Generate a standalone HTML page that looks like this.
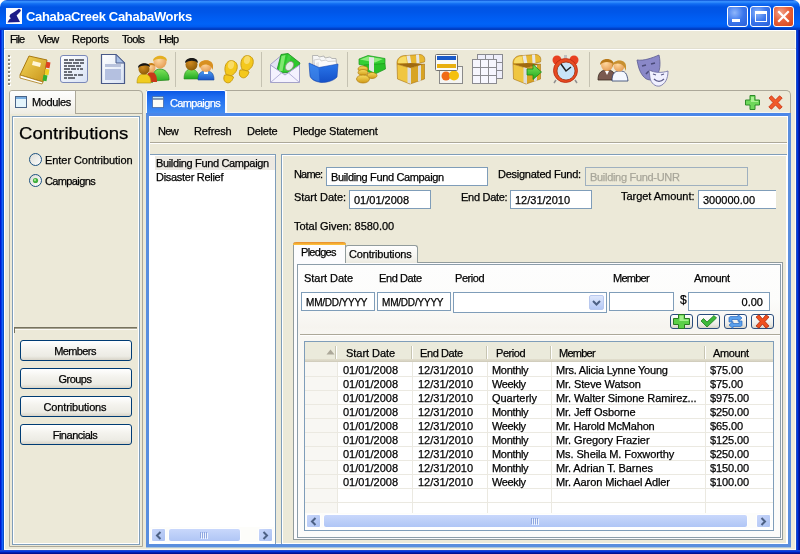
<!DOCTYPE html>
<html><head><meta charset="utf-8"><style>
*{box-sizing:border-box}
html,body{margin:0;padding:0}
body{width:800px;height:554px;overflow:hidden;position:relative;background:#ece9d8;font-family:"Liberation Sans",sans-serif;font-size:11px;color:#000}
.a{position:absolute}
.t{position:absolute;white-space:nowrap;line-height:13px;height:13px;will-change:transform;-webkit-text-stroke:0.25px currentColor}
svg{position:absolute;overflow:visible}
</style></head><body>
<div class="a" style="left:0;top:0;width:800px;height:30px;background:#fff"></div>
<div class="a" style="left:0px;top:0px;width:800px;height:30px;border-radius:7px 7px 0 0;background:linear-gradient(#0040c8 0px,#2f86fb 1px,#3a93ff 2px,#1a78f6 3px,#0a62ee 5px,#0055e5 7px,#0056e8 12px,#005df2 18px,#0063f8 24px,#005aee 27px,#0044d0 28px,#003ab8 30px)"></div>
<div class="a" style="left:0px;top:30px;width:4px;height:524px;background:linear-gradient(90deg,#0018d0 0,#0018d0 1px,#0440e6 1px,#0440e6 2px,#1a62fa 2px,#1a62fa 3px,#0a50c8 3px)"></div>
<div class="a" style="left:796px;top:30px;width:4px;height:524px;background:linear-gradient(90deg,#1848c8 0,#1848c8 1px,#0038e0 1px,#0038e0 2px,#0020b0 2px,#0020b0 3px,#001090 3px)"></div>
<div class="a" style="left:0px;top:550px;width:800px;height:4px;background:linear-gradient(#1a48d0 0,#1a48d0 1px,#0038e0 1px,#0038e0 2px,#0020b0 2px,#0020b0 3px,#001090 3px)"></div>
<svg style="left:6px;top:8px" width="16" height="16" viewBox="0 0 16 16">
<rect x="0" y="0" width="16" height="16" fill="#fbfbff"/>
<path d="M13 0.8 L15 2 L14.2 3.8 L10.6 7.4 L12.2 10.5 L14 14 L1.5 14.5 L3.2 11.5 L4.8 10.2 L3.4 8.6 L4.4 6.2 L9 3.5 Z" fill="#1c1a88"/>
</svg>
<div class="t" style="left:26px;top:9px;letter-spacing:-0.32px;color:#fff;font-weight:bold;font-size:13px;line-height:16px;height:16px;-webkit-text-stroke:0">CahabaCreek CahabaWorks</div>
<div class="a" style="left:727px;top:6px;width:21px;height:21px;border:1px solid #fff;border-radius:3px;background:radial-gradient(circle at 35% 30%,#8fb6fb 0,#3a76ec 50%,#2a5fd8 100%)"></div>
<div class="a" style="left:750px;top:6px;width:21px;height:21px;border:1px solid #fff;border-radius:3px;background:radial-gradient(circle at 35% 30%,#8fb6fb 0,#3a76ec 50%,#2a5fd8 100%)"></div>
<div class="a" style="left:773px;top:6px;width:21px;height:21px;border:1px solid #fff;border-radius:3px;background:radial-gradient(circle at 35% 30%,#f2a58c 0,#e8623c 45%,#d54316 100%)"></div>
<div class="a" style="left:732px;top:19px;width:8px;height:3px;background:#fff"></div>
<div class="a" style="left:755px;top:11px;width:12px;height:11px;border:1px solid #fff;border-top-width:3px"></div>
<svg style="left:776px;top:9px" width="15" height="15" viewBox="0 0 15 15">
<path d="M3 3 L12 12 M12 3 L3 12" stroke="#fff" stroke-width="2.2" stroke-linecap="square"/></svg>
<div class="a" style="left:4px;top:30px;width:792px;height:1px;background:#fff"></div>
<div class="a" style="left:4px;top:30px;width:1px;height:520px;background:#fff"></div>
<div class="a" style="left:795px;top:30px;width:1px;height:520px;background:#fbfaf6"></div>
<div class="a" style="left:4px;top:549px;width:792px;height:1px;background:#fbfaf6"></div>
<div class="t" style="left:10px;top:33px;letter-spacing:-0.85px;">File</div>
<div class="t" style="left:38px;top:33px;letter-spacing:-0.85px;">View</div>
<div class="t" style="left:72px;top:33px;letter-spacing:-0.27px;">Reports</div>
<div class="t" style="left:122px;top:33px;letter-spacing:-0.68px;">Tools</div>
<div class="t" style="left:159px;top:33px;letter-spacing:-0.85px;">Help</div>
<div class="a" style="left:4px;top:48px;width:792px;height:1px;background:#e2dfd0"></div>
<div class="a" style="left:4px;top:49px;width:792px;height:1px;background:#fff"></div>
<div class="a" style="left:8px;top:55px;width:2px;height:2px;background:#8a867a"></div>
<div class="a" style="left:10px;top:56px;width:1px;height:2px;background:#fff"></div>
<div class="a" style="left:8px;top:57px;width:2px;height:1px;background:#fff"></div>
<div class="a" style="left:8px;top:59px;width:2px;height:2px;background:#8a867a"></div>
<div class="a" style="left:10px;top:60px;width:1px;height:2px;background:#fff"></div>
<div class="a" style="left:8px;top:61px;width:2px;height:1px;background:#fff"></div>
<div class="a" style="left:8px;top:63px;width:2px;height:2px;background:#8a867a"></div>
<div class="a" style="left:10px;top:64px;width:1px;height:2px;background:#fff"></div>
<div class="a" style="left:8px;top:65px;width:2px;height:1px;background:#fff"></div>
<div class="a" style="left:8px;top:67px;width:2px;height:2px;background:#8a867a"></div>
<div class="a" style="left:10px;top:68px;width:1px;height:2px;background:#fff"></div>
<div class="a" style="left:8px;top:69px;width:2px;height:1px;background:#fff"></div>
<div class="a" style="left:8px;top:71px;width:2px;height:2px;background:#8a867a"></div>
<div class="a" style="left:10px;top:72px;width:1px;height:2px;background:#fff"></div>
<div class="a" style="left:8px;top:73px;width:2px;height:1px;background:#fff"></div>
<div class="a" style="left:8px;top:75px;width:2px;height:2px;background:#8a867a"></div>
<div class="a" style="left:10px;top:76px;width:1px;height:2px;background:#fff"></div>
<div class="a" style="left:8px;top:77px;width:2px;height:1px;background:#fff"></div>
<div class="a" style="left:8px;top:79px;width:2px;height:2px;background:#8a867a"></div>
<div class="a" style="left:10px;top:80px;width:1px;height:2px;background:#fff"></div>
<div class="a" style="left:8px;top:81px;width:2px;height:1px;background:#fff"></div>
<div class="a" style="left:8px;top:83px;width:2px;height:2px;background:#8a867a"></div>
<div class="a" style="left:10px;top:84px;width:1px;height:2px;background:#fff"></div>
<div class="a" style="left:8px;top:85px;width:2px;height:1px;background:#fff"></div>
<div class="a" style="left:175px;top:52px;width:1px;height:35px;background:#c5c2b2"></div>
<div class="a" style="left:261px;top:52px;width:1px;height:35px;background:#c5c2b2"></div>
<div class="a" style="left:347px;top:52px;width:1px;height:35px;background:#c5c2b2"></div>
<div class="a" style="left:589px;top:52px;width:1px;height:35px;background:#c5c2b2"></div>
<svg style="left:0px;top:0px" width="1" height="1" viewBox="0 0 1 1"><defs>
<linearGradient id="gold" x1="0" y1="0" x2="1" y2="1"><stop offset="0" stop-color="#f4d65a"/><stop offset="1" stop-color="#c8941a"/></linearGradient>
<linearGradient id="gold2" x1="0" y1="0" x2="0" y2="1"><stop offset="0" stop-color="#f8dc60"/><stop offset="1" stop-color="#d09a18"/></linearGradient>
<linearGradient id="green" x1="0" y1="0" x2="0" y2="1"><stop offset="0" stop-color="#7ee35a"/><stop offset="1" stop-color="#1ea81e"/></linearGradient>
<linearGradient id="blue" x1="0" y1="0" x2="0" y2="1"><stop offset="0" stop-color="#4d9cf0"/><stop offset="1" stop-color="#1a55c8"/></linearGradient>
<linearGradient id="bluebox" x1="0" y1="0" x2="0" y2="1"><stop offset="0" stop-color="#2a78ec"/><stop offset="1" stop-color="#1450c8"/></linearGradient>
<linearGradient id="doc" x1="0" y1="0" x2="1" y2="1"><stop offset="0" stop-color="#ffffff"/><stop offset="1" stop-color="#d8e2f4"/></linearGradient>
<radialGradient id="face" cx="0.4" cy="0.35" r="0.7"><stop offset="0" stop-color="#ffd8a0"/><stop offset="1" stop-color="#e49a50"/></radialGradient>
<radialGradient id="dface" cx="0.4" cy="0.35" r="0.7"><stop offset="0" stop-color="#d08a20"/><stop offset="1" stop-color="#8a5a08"/></radialGradient>
</defs></svg>
<svg style="left:18px;top:54px" width="34" height="32" viewBox="0 0 34 32">
<path d="M11 2 L29 6 L25 28 L2 21 Z" fill="url(#gold)" stroke="#a87810" stroke-width="1"/>
<path d="M2 21 L25 28 L24 30 L2 24 Z" fill="#fff" stroke="#a87810" stroke-width="0.8"/>
<path d="M15 7 L23 9 L22 13 L14 11 Z" fill="#fff6d8"/>
<rect x="28" y="8" width="4" height="6" fill="#e04020" transform="rotate(10 30 11)"/>
<rect x="27" y="15" width="4" height="6" fill="#f0d020" transform="rotate(10 29 18)"/>
<rect x="25" y="21" width="4" height="6" fill="#30b030" transform="rotate(10 27 24)"/>
</svg>
<svg style="left:60px;top:55px" width="29" height="28" viewBox="0 0 29 28">
<rect x="0.5" y="0.5" width="27" height="27" rx="2.5" fill="url(#doc)" stroke="#7a88b8"/>
<g fill="#6a6e78">
<rect x="4" y="4" width="4" height="2"/><rect x="9" y="4" width="5" height="2"/><rect x="15" y="4" width="9" height="2"/>
<rect x="4" y="7" width="8" height="2"/><rect x="13" y="7" width="6" height="2"/><rect x="20" y="7" width="4" height="2"/>
<rect x="4" y="10" width="3" height="2"/><rect x="8" y="10" width="7" height="2"/><rect x="16" y="10" width="5" height="2"/>
<rect x="4" y="13" width="6" height="2"/><rect x="11" y="13" width="5" height="2"/><rect x="17" y="13" width="2" height="2"/><rect x="20" y="13" width="3" height="2"/>
<rect x="4" y="16" width="3" height="2"/><rect x="8" y="16" width="4" height="2"/>
<rect x="4" y="19" width="9" height="2"/><rect x="14" y="19" width="3" height="2"/><rect x="18" y="19" width="5" height="2"/>
<rect x="4" y="22" width="3" height="2"/><rect x="8" y="22" width="7" height="2"/>
</g></svg>
<svg style="left:100px;top:53px" width="27" height="32" viewBox="0 0 27 32">
<path d="M1.5 1.5 L16 1.5 L24.5 10 L24.5 30.5 L1.5 30.5 Z" fill="url(#doc)" stroke="#4a5a88" stroke-width="1.2"/>
<path d="M16 1.5 L16 10 L24.5 10 Z" fill="#a8c0e8" stroke="#4a5a88" stroke-width="1"/>
<rect x="5" y="11" width="16" height="3" fill="#b8c2dc"/>
<rect x="5" y="16" width="16" height="11" fill="#b4c0e0"/>
</svg>
<svg style="left:136px;top:53px" width="34" height="32" viewBox="0 0 34 32">
<path d="M16 30 C16 20 19 16 24 16 C29 16 33 20 33 26 L33 27 L16 28 Z" fill="url(#green)" stroke="#2a8a20" stroke-width="0.8"/>
<circle cx="24" cy="9" r="6.5" fill="url(#face)"/>
<path d="M17 8 C17 2 31 1 31 8 C28 5 21 5 17 8 Z" fill="#e4b020"/>
<path d="M10 29 C10 22 12 19 15 19 C19 19 21 22 21 29 Z" fill="#c83818"/>
<circle cx="15" cy="15" r="4.5" fill="url(#face)"/>
<path d="M11 14 C11 9 19 9 19 13 C16 11 13 12 11 14 Z" fill="#c88018"/>
<path d="M1 30 C1 23 4 21 8 21 C12 21 15 23 15 30 Z" fill="#f0cc20" stroke="#b09010" stroke-width="0.6"/>
<circle cx="8" cy="16" r="5.5" fill="url(#dface)"/>
<path d="M2 15 C2 9 14 9 14 14 C11 12 5 12 2 15 Z" fill="#141414"/>
</svg>
<svg style="left:183px;top:56px" width="33" height="26" viewBox="0 0 33 26">
<path d="M1 23 C1 16 4 13 8 13 C12 13 16 16 16 23 Z" fill="url(#green)" stroke="#2a8a20" stroke-width="0.6"/>
<circle cx="8.5" cy="8.5" r="6" fill="url(#dface)"/>
<path d="M2 7 C2 1 15 0 15 7 C12 4 6 4 2 7 Z" fill="#181818"/>
<path d="M15 24 C15 17 18 15 23 15 C28 15 31 17 31 24 Z" fill="url(#blue)" stroke="#184a9a" stroke-width="0.6"/>
<rect x="21" y="14" width="4" height="4" fill="#fff"/>
<circle cx="23" cy="10" r="6" fill="url(#face)"/>
<path d="M16 10 C15 3 29 2 30 9 L30 14 C28 8 20 6 17 12 Z" fill="#d89020"/>
</svg>
<svg style="left:222px;top:54px" width="33" height="30" viewBox="0 0 33 30">
<g fill="#f4c81c" stroke="#c89a10" stroke-width="0.9">
<g transform="translate(2.5 6) rotate(14 6 8)"><path d="M6.5 0.5 C10.5 0.5 12.5 3.5 12.5 7.5 C12.5 11 10.5 13.5 8.5 15.5 L3.5 15.5 C1.5 13 0.5 10.5 0.5 7.5 C0.5 3.5 2.5 0.5 6.5 0.5 Z"/></g>
<g transform="translate(1 20.5) rotate(14 5 4)"><path d="M0.8 1.5 C3 0.3 8 0.3 10 1.2 C10 5 8 8.3 5.2 8.3 C2.2 8.3 0.3 6 0.8 1.5 Z"/></g>
<g transform="translate(18.5 1) rotate(14 6 8)"><path d="M6.5 0.5 C10.5 0.5 12.5 3.5 12.5 7.5 C12.5 11 10.5 13.5 8.5 15.5 L3.5 15.5 C1.5 13 0.5 10.5 0.5 7.5 C0.5 3.5 2.5 0.5 6.5 0.5 Z"/></g>
<g transform="translate(16.5 15.5) rotate(14 5 4)"><path d="M0.8 1.5 C3 0.3 8 0.3 10 1.2 C10 5 8 8.3 5.2 8.3 C2.2 8.3 0.3 6 0.8 1.5 Z"/></g>
</g>
<g fill="#fbe27a" opacity="0.8"><ellipse cx="9" cy="11" rx="3" ry="4" transform="rotate(14 9 11)"/><ellipse cx="25" cy="6" rx="3" ry="4" transform="rotate(14 25 6)"/></g>
</svg>
<svg style="left:268px;top:52px" width="34" height="33" viewBox="0 0 34 33">
<path d="M2.5 12.5 L12 4.5 L31.5 11.5 L31.5 30.5 L2.5 30.5 Z" fill="#e4e2f4" stroke="#a4a2c8" stroke-width="1"/>
<path d="M9 18 L13 2.5 L20 1.5 L32 11 L28 20 L12 21 Z" fill="#2cc82c" stroke="#188a18" stroke-width="0.8"/>
<path d="M13.5 4 L17.5 3 L14.5 19 L11 19 Z" fill="#80e870"/>
<path d="M20 3 L23 4 L19 19 L16 19 Z" fill="#40d040"/>
<ellipse cx="21.5" cy="14" rx="3.5" ry="5" fill="#e4f0e4" stroke="#9a8a8a" stroke-width="0.7" transform="rotate(35 21.5 14)"/>
<path d="M2.5 13 L17 23 L31.5 13 L31.5 30.5 L2.5 30.5 Z" fill="#f4f2fe" stroke="#a4a2c8" stroke-width="1"/>
<path d="M2.5 30.5 L14 20.5 M31.5 30.5 L20 20.5" stroke="#b4b2da" stroke-width="1"/>
</svg>
<svg style="left:306px;top:52px" width="34" height="33" viewBox="0 0 34 33">
<path d="M6.5 3.5 L12 3.5 L13 5 L18 4 L19 6 L24 5 L26 6.5 L30 6.5 L31 14 L7 14 Z" fill="#f6f6f6" stroke="#a8a8a8" stroke-width="0.8"/>
<path d="M8 8 L14 7 L15 9 L20 8 L22 9.5 L30 9 L31 15 L9 16 Z" fill="#fbfbfb" stroke="#b8b8b8" stroke-width="0.6"/>
<path d="M10 11 L13 10 L13 16 L10 16 Z" fill="#e8e8e8"/>
<path d="M3 11 L13 15.5 L32 12 L31 25 C28 28.5 22 30.5 15 30.5 C9 29.5 5 27.5 4 24 Z" fill="url(#bluebox)" stroke="#1a48b0" stroke-width="0.6"/>
<path d="M3.5 12 L12.5 16 L13.5 29.5 C9 28.5 5.5 27 4.5 24 Z" fill="#4a94f0" opacity="0.55"/>
</svg>
<svg style="left:355px;top:54px" width="33" height="30" viewBox="0 0 33 30">
<path d="M4 5 L13 1.5 L30 4.5 L30 9.5 L21 13.5 L4 10.5 Z" fill="#34d034" stroke="#1c961c" stroke-width="0.7"/>
<path d="M5 5.5 L13 2.5 L28 5 L20 8.5 Z" fill="#8cec7c"/>
<path d="M9 11 L30 9.5 L30.5 15 L20 20 L9 16.5 Z" fill="#28c028" stroke="#1c961c" stroke-width="0.7"/>
<path d="M14 3 L19 3.5 L19 18.5 L14 16 Z" fill="#e4e4e4"/>
<g fill="url(#gold2)" stroke="#b07a08" stroke-width="0.7">
<ellipse cx="17" cy="21.5" rx="5" ry="3"/>
<ellipse cx="8" cy="15" rx="5" ry="3"/>
<ellipse cx="8" cy="18.5" rx="5" ry="3"/>
<ellipse cx="8" cy="25" rx="6.5" ry="4"/>
</g></svg>
<svg style="left:395px;top:54px" width="32" height="32" viewBox="0 0 32 32">
<path d="M2 10 C1.5 4 6 1 12 1.5 L25 0.5 C29 1 30.5 4 29.5 8 L16 10.5 Z" fill="#e8b830" stroke="#a87010" stroke-width="0.6"/>
<path d="M3 9 C3 4 7 2 11 2.5 L12 9.5 Z" fill="#f8dc68"/>
<path d="M11.5 1.8 L15 1.5 L16.5 10 L13 10 Z M21 0.8 L24 0.6 L24.5 9 L21.5 9.5 Z" fill="#e6e6e6"/>
<path d="M2 10 L16 9 L29.5 10 L15 14 Z" fill="#a06a10"/>
<path d="M2 10 L15 14 L15 30 L2.5 25 Z" fill="#f0c640" stroke="#a87010" stroke-width="0.6"/>
<path d="M15 14 L29.5 10 L29.5 25 L15 30 Z" fill="#d8a424" stroke="#a87010" stroke-width="0.6"/>
<path d="M12.5 13.3 L16 14.3 L16 30 L12.5 28.8 Z M23 12 L26 11 L26 26.5 L23 27.5 Z" fill="#dcdcdc"/>
</svg>
<svg style="left:434px;top:53px" width="30" height="32" viewBox="0 0 30 32">
<rect x="5.5" y="13.5" width="23" height="17" fill="#f4f4f2" stroke="#8a8a8a"/>
<circle cx="12" cy="23" r="4.5" fill="#f06a18"/>
<circle cx="20" cy="22.5" r="5" fill="#f4c010"/>
<rect x="1.5" y="1.5" width="22" height="16" rx="1" fill="#fbfbf8" stroke="#707070"/>
<rect x="3" y="3" width="19" height="4" fill="#1a5ac8"/>
<rect x="3" y="11" width="19" height="4" fill="#e8b010"/>
</svg>
<svg style="left:471px;top:53px" width="34" height="32" viewBox="0 0 34 32">
<rect x="6.5" y="1.5" width="25" height="24" fill="#eeeefa" stroke="#8a8a90"/>
<path d="M14.5 1.5 V25.5 M22.5 1.5 V25.5 M6.5 9.5 H31.5 M6.5 17.5 H31.5" stroke="#8a8a90"/>
<rect x="1.5" y="6.5" width="24" height="24" fill="#f6f6fe" stroke="#8a8a90"/>
<path d="M9.5 6.5 V30.5 M17.5 6.5 V30.5 M1.5 14.5 H25.5 M1.5 22.5 H25.5" stroke="#8a8a90"/>
</svg>
<svg style="left:511px;top:54px" width="32" height="32" viewBox="0 0 32 32">
<path d="M2 10 C1.5 4 6 1 12 1.5 L25 0.5 C29 1 30.5 4 29.5 8 L16 10.5 Z" fill="#e8b830" stroke="#a87010" stroke-width="0.6"/>
<path d="M3 9 C3 4 7 2 11 2.5 L12 9.5 Z" fill="#f8dc68"/>
<path d="M11.5 1.8 L15 1.5 L16.5 10 L13 10 Z M21 0.8 L24 0.6 L24.5 9 L21.5 9.5 Z" fill="#e6e6e6"/>
<path d="M2 10 L16 9 L29.5 10 L15 14 Z" fill="#a06a10"/>
<path d="M2 10 L15 14 L15 30 L2.5 25 Z" fill="#f0c640" stroke="#a87010" stroke-width="0.6"/>
<path d="M15 14 L29.5 10 L29.5 25 L15 30 Z" fill="#d8a424" stroke="#a87010" stroke-width="0.6"/>
<path d="M12.5 13.3 L16 14.3 L16 30 L12.5 28.8 Z M23 12 L26 11 L26 26.5 L23 27.5 Z" fill="#dcdcdc"/>
<path d="M16 15 L22 15 L22 10.5 L30.5 18 L22 25.5 L22 21 L16 21 Z" fill="url(#green)" stroke="#1a8a1a" stroke-width="0.8"/></svg>
<svg style="left:552px;top:54px" width="28" height="30" viewBox="0 0 28 30">
<circle cx="5" cy="6" r="4.5" fill="#e84020"/>
<circle cx="22" cy="6" r="4.5" fill="#e84020"/>
<rect x="12" y="1" width="3" height="3" fill="#c0c0c0"/>
<path d="M4 26 L2 29 M23 26 L25 29" stroke="#909090" stroke-width="1.5"/>
<circle cx="13.5" cy="16.5" r="12" fill="#e84a20" stroke="#b82810" stroke-width="0.8"/>
<circle cx="14" cy="17" r="9" fill="#c8e4f8" stroke="#9a3010" stroke-width="0.8"/>
<path d="M9 10 L14 17 L19 13" fill="none" stroke="#202020" stroke-width="1.5"/>
</svg>
<svg style="left:597px;top:56px" width="32" height="26" viewBox="0 0 32 26">
<path d="M1 24 C1 16 5 14 10 14 C15 14 18 16 19 24 Z" fill="#7a5a50" stroke="#3a2a20" stroke-width="0.8"/>
<path d="M8 15 L10 19 L12 15 Z" fill="#fff"/>
<circle cx="10" cy="9" r="6" fill="url(#face)"/>
<path d="M3 9 C3 1 17 1 17 9 C14 5 6 5 3 9 Z" fill="#b87818"/>
<path d="M15 25 C15 17 18 15 23 15 C28 15 30 17 31 25 Z" fill="#f4f8ff" stroke="#2a3a6a" stroke-width="0.8"/>
<circle cx="22" cy="10" r="5.5" fill="url(#face)"/>
<path d="M15 11 C14 3 29 2 29 10 L29 15 C27 9 24 6 17 8 Z" fill="#c89030"/>
</svg>
<svg style="left:636px;top:54px" width="33" height="32" viewBox="0 0 33 32">
<path d="M1 6 C8 7 16 4 23 1 C25 10 24 18 20 23 C16 27 11 27 7 22 C3 17 2 11 1 6 Z" fill="#8a88c8" stroke="#5a5a90" stroke-width="0.8"/>
<path d="M6 12 L10 11 M15 10 L19 9 M10 20 C12 17 15 17 17 18" stroke="#4a4a78" stroke-width="1.5" fill="none"/>
<path d="M13 16 C19 19 26 19 32 17 C32 25 29 30 24 32 C19 33 15 29 14 24 Z" fill="#f0f0ff" stroke="#6a6aa0" stroke-width="0.8"/>
<path d="M17 20 L20 21 M25 21 L28 20 M18 25 C21 28 25 28 28 25" stroke="#5a5a88" stroke-width="1.3" fill="none"/>
</svg>
<div class="a" style="left:9px;top:90px;width:134px;height:457px;border:1px solid #aca899;border-radius:3px 4px 0 0;background:#ece9d8"></div>
<div class="a" style="left:10px;top:91px;width:65px;height:23px;background:linear-gradient(#fdfdfd,#f6f5f0 60%,#eeece2);border-radius:2px 0 0 0"></div>
<div class="a" style="left:75px;top:90px;width:1px;height:24px;background:#aca899"></div>
<div class="a" style="left:76px;top:113px;width:66px;height:1px;background:#aca899"></div>
<svg style="left:15px;top:96px" width="12" height="12" viewBox="0 0 12 12">
<rect x="0.5" y="0.5" width="11" height="11" fill="#e4f4fc" stroke="#4a6488"/>
<rect x="1" y="1" width="10" height="2" fill="#7aaee0"/>
</svg>
<div class="t" style="left:32px;top:96px;letter-spacing:-0.4px;">Modules</div>
<div class="a" style="left:12px;top:116px;width:128px;height:429px;border:1px solid #7f9db9;background:#ece9d8"></div>
<div class="a" style="left:13px;top:117px;width:126px;height:427px;border:1px solid #fff"></div>
<div class="t" style="left:19px;top:125px;font-size:16px;line-height:18px;height:18px;transform:scaleX(1.16);transform-origin:0 0;-webkit-text-stroke:0.25px #000">Contributions</div>
<svg style="left:29px;top:153px" width="13" height="13" viewBox="0 0 13 13">
<defs><linearGradient id="rg153" x1="0" y1="0" x2="1" y2="1"><stop offset="0" stop-color="#dcdbd4"/><stop offset="1" stop-color="#fff"/></linearGradient></defs>
<circle cx="6.5" cy="6.5" r="6" fill="url(#rg153)" stroke="#1c5180" stroke-width="1"/>

</svg>
<svg style="left:29px;top:174px" width="13" height="13" viewBox="0 0 13 13">
<defs><linearGradient id="rg174" x1="0" y1="0" x2="1" y2="1"><stop offset="0" stop-color="#dcdbd4"/><stop offset="1" stop-color="#fff"/></linearGradient></defs>
<circle cx="6.5" cy="6.5" r="6" fill="url(#rg174)" stroke="#1c5180" stroke-width="1"/>
<circle cx="6.5" cy="6.5" r="2.6" fill="#3fae3c"/><circle cx="6" cy="6" r="1.2" fill="#9ee28e"/>
</svg>
<div class="t" style="left:45px;top:154px;letter-spacing:-0.06px;">Enter Contribution</div>
<div class="t" style="left:45px;top:175px;letter-spacing:-0.62px;">Campaigns</div>
<div class="a" style="left:14px;top:327px;width:123px;height:1px;background:#76725f"></div>
<div class="a" style="left:14px;top:328px;width:123px;height:1px;background:#a8a491"></div>
<div class="a" style="left:14px;top:327px;width:1px;height:6px;background:#76725f"></div>
<div class="a" style="left:15px;top:329px;width:122px;height:1px;background:#fbfaf6"></div>
<div class="a" style="left:20px;top:340px;width:112px;height:21px;border:1px solid #003c74;border-radius:3px;background:linear-gradient(#ffffff,#f4f3ee 40%,#ecebe4 80%,#d8d4c8)"></div>
<div class="t" style="left:19px;top:345px;width:112px;text-align:center;letter-spacing:-0.59px">Members</div>
<div class="a" style="left:20px;top:368px;width:112px;height:21px;border:1px solid #003c74;border-radius:3px;background:linear-gradient(#ffffff,#f4f3ee 40%,#ecebe4 80%,#d8d4c8)"></div>
<div class="t" style="left:19px;top:373px;width:112px;text-align:center;letter-spacing:-0.55px">Groups</div>
<div class="a" style="left:20px;top:396px;width:112px;height:21px;border:1px solid #003c74;border-radius:3px;background:linear-gradient(#ffffff,#f4f3ee 40%,#ecebe4 80%,#d8d4c8)"></div>
<div class="t" style="left:19px;top:401px;width:112px;text-align:center;letter-spacing:-0.15px">Contributions</div>
<div class="a" style="left:20px;top:424px;width:112px;height:21px;border:1px solid #003c74;border-radius:3px;background:linear-gradient(#ffffff,#f4f3ee 40%,#ecebe4 80%,#d8d4c8)"></div>
<div class="t" style="left:19px;top:429px;width:112px;text-align:center;letter-spacing:-0.49px">Financials</div>
<div class="a" style="left:146px;top:90px;width:645px;height:24px;border:1px solid #aca899;border-bottom:0;border-radius:0 5px 0 0;background:#ece9d8"></div>
<div class="a" style="left:226px;top:91px;width:563px;height:22px;border-left:1px solid #fff;border-bottom:1px solid #f6f5ef"></div>
<div class="a" style="left:146px;top:90px;width:80px;height:26px;background:#fbfcff;border-radius:2px 2px 0 0"></div>
<div class="a" style="left:147px;top:91px;width:78px;height:25px;background:linear-gradient(#0a57e4 0,#1f6cf0 6px,#2f7df2 14px,#4a92f2 25px);border-radius:1px 1px 0 0"></div>
<svg style="left:152px;top:96px" width="12" height="12" viewBox="0 0 12 12">
<rect x="0.5" y="0.5" width="11" height="11" fill="#fdfdf6" stroke="#2a5090" stroke-width="1" stroke-opacity="0.6"/>
<rect x="1" y="1" width="10" height="1.5" fill="#c8ecfa"/>
<rect x="1" y="2.5" width="10" height="1" fill="#1e3c70"/>
</svg>
<div class="t" style="left:170px;top:97px;letter-spacing:-0.62px;color:#fff">Campaigns</div>
<div class="a" style="left:146px;top:113px;width:645px;height:434px;border:3px solid #5a8ede;border-top-color:#4a86e8;background:#ece9d8"></div>
<div class="a" style="left:149px;top:116px;width:639px;height:428px;border:1px solid #fff"></div>
<div class="a" style="left:146px;top:547px;width:645px;height:1px;background:#a8c4dc"></div>
<svg style="left:745px;top:95px" width="15" height="15" viewBox="0 0 15 15">
<path d="M5 0.5 H10 V5 H14.5 V10 H10 V14.5 H5 V10 H0.5 V5 H5 Z" fill="#6ed85a" stroke="#2e8a28" stroke-width="1"/>
<path d="M6 2 H9 V6 H13 V7 H6 Z" fill="#a8f090"/>
</svg>
<svg style="left:768px;top:95px" width="15" height="15" viewBox="0 0 15 15">
<path d="M1 3 L3.5 0.8 L7.5 5 L11.5 0.8 L14.2 3 L10 7.5 L14.2 12 L11.5 14.2 L7.5 10 L3.5 14.2 L0.8 12 L5 7.5 Z" fill="#f05a2a" stroke="#c83010" stroke-width="0.8"/>
</svg>
<div class="t" style="left:158px;top:125px;letter-spacing:-0.7px;">New</div>
<div class="t" style="left:194px;top:125px;letter-spacing:-0.15px;">Refresh</div>
<div class="t" style="left:247px;top:125px;letter-spacing:-0.24px;">Delete</div>
<div class="t" style="left:293px;top:125px;letter-spacing:-0.18px;">Pledge Statement</div>
<div class="a" style="left:150px;top:142px;width:637px;height:1px;background:#aca899"></div>
<div class="a" style="left:150px;top:143px;width:637px;height:1px;background:#fff"></div>
<div class="a" style="left:150px;top:154px;width:126px;height:390px;border-top:1px solid #7f9db9;border-right:1px solid #7f9db9;background:#fff"></div>
<div class="a" style="left:155px;top:156px;width:120px;height:14px;background:#ece9e2"></div>
<div class="t" style="left:156px;top:157px;letter-spacing:-0.35px;">Building Fund Campaign</div>
<div class="t" style="left:156px;top:171px;letter-spacing:-0.29px;">Disaster Relief</div>
<div class="a" style="left:281px;top:154px;width:506px;height:390px;border-top:1px solid #7f9db9;border-left:1px solid #7f9db9;background:#ece9d8"></div>
<div class="a" style="left:282px;top:155px;width:505px;height:389px;border-top:1px solid #fff;border-left:1px solid #fff;border-right:1px solid #fff;border-bottom:1px solid #fff"></div>
<div class="t" style="left:294px;top:168px;letter-spacing:-0.84px;">Name:</div>
<div class="a" style="left:326px;top:167px;width:162px;height:19px;border:1px solid #7f9db9;background:#fff;"></div>
<div class="t" style="left:331px;top:171px;letter-spacing:-0.35px;">Building Fund Campaign</div>
<div class="t" style="left:498px;top:168px;letter-spacing:-0.25px;">Designated Fund:</div>
<div class="a" style="left:585px;top:167px;width:163px;height:19px;border:1px solid #7f9db9;background:#fff;background:#ece9d8;border-color:#9fb0bf"></div>
<div class="t" style="left:590px;top:171px;letter-spacing:-0.3px;color:#a8a69a">Building Fund-UNR</div>
<div class="t" style="left:294px;top:191px;letter-spacing:-0.05px;">Start Date:</div>
<div class="a" style="left:349px;top:190px;width:82px;height:19px;border:1px solid #7f9db9;background:#fff;"></div>
<div class="t" style="left:354px;top:194px;">01/01/2008</div>
<div class="t" style="left:461px;top:191px;letter-spacing:-0.28px;">End Date:</div>
<div class="a" style="left:510px;top:190px;width:82px;height:19px;border:1px solid #7f9db9;background:#fff;"></div>
<div class="t" style="left:515px;top:194px;">12/31/2010</div>
<div class="t" style="left:621px;top:190px;letter-spacing:-0.04px;">Target Amount:</div>
<div class="a" style="left:698px;top:190px;width:78px;height:19px;border:1px solid #7f9db9;border-right:0;background:#fff"></div>
<div class="t" style="left:703px;top:194px;">300000.00</div>
<div class="t" style="left:294px;top:220px;letter-spacing:-0.04px;">Total Given: 8580.00</div>
<div class="a" style="left:293px;top:262px;width:490px;height:278px;border:1px solid #919b9c;background:#fcfcfe"></div>
<div class="a" style="left:345px;top:245px;width:73px;height:18px;border:1px solid #919b9c;border-bottom:0;border-radius:3px 3px 0 0;background:linear-gradient(#fefefe,#f4f3ee 70%,#eceae0)"></div>
<div class="t" style="left:349px;top:248px;letter-spacing:-0.17px;">Contributions</div>
<div class="a" style="left:293px;top:242px;width:53px;height:21px;border-left:1px solid #919b9c;border-right:1px solid #919b9c;background:#fcfcfe;border-radius:3px 3px 0 0"></div>
<div class="a" style="left:293px;top:242px;width:53px;height:3px;background:linear-gradient(#e68b2c,#ffc73c);border-radius:3px 3px 0 0"></div>
<div class="t" style="left:301px;top:246px;letter-spacing:-0.71px;">Pledges</div>
<div class="a" style="left:297px;top:264px;width:484px;height:274px;border:1px solid #8c9daa;background:linear-gradient(#fdfdfd 0,#fcfcfb 35px,#f6f4ef 62px,#f8f7f3 72px,#fcfcfb 277px)"></div>
<div class="t" style="left:304px;top:272px;letter-spacing:-0.04px;">Start Date</div>
<div class="t" style="left:379px;top:272px;letter-spacing:-0.39px;">End Date</div>
<div class="t" style="left:455px;top:272px;letter-spacing:-0.44px;">Period</div>
<div class="t" style="left:613px;top:272px;letter-spacing:-0.74px;">Member</div>
<div class="t" style="left:694px;top:272px;letter-spacing:-0.37px;">Amount</div>
<div class="a" style="left:301px;top:292px;width:74px;height:19px;border:1px solid #7f9db9;background:#fff;"></div>
<div class="t" style="left:306px;top:296px;letter-spacing:-0.93px;font-size:10px;letter-spacing:-0.2px">MM/DD/YYYY</div>
<div class="a" style="left:377px;top:292px;width:74px;height:19px;border:1px solid #7f9db9;background:#fff;"></div>
<div class="t" style="left:382px;top:296px;letter-spacing:-0.93px;font-size:10px;letter-spacing:-0.2px">MM/DD/YYYY</div>
<div class="a" style="left:453px;top:292px;width:154px;height:21px;border:1px solid #7f9db9;background:#fff"></div>
<div class="a" style="left:589px;top:295px;width:15px;height:15px;border:1px solid #b9c9ef;border-radius:2px;background:linear-gradient(#dfe8fc,#b4c8f6)"></div>
<svg style="left:592px;top:298px" width="9" height="9" viewBox="0 0 9 9"><path d="M1 3 L4.5 6.5 L8 3" fill="none" stroke="#4d6185" stroke-width="2"/></svg>
<div class="a" style="left:609px;top:292px;width:65px;height:19px;border:1px solid #7f9db9;background:#fff;"></div>
<div class="t" style="left:680px;top:294px;letter-spacing:-0.1px;font-size:12px">$</div>
<div class="a" style="left:688px;top:292px;width:82px;height:19px;border:1px solid #7f9db9;background:#fff;"></div>
<div class="t" style="left:688px;top:296px;width:75px;text-align:right;">0.00</div>
<div class="a" style="left:670px;top:314px;width:23px;height:15px;border:1px solid #2a4c7c;border-radius:3px;background:linear-gradient(#fff,#ecebe6 70%,#d8d4c8)"></div>
<svg style="left:670px;top:314px" width="23" height="15" viewBox="0 0 23 15"><path d="M8.5 0.5 H14.5 V4.5 H19.5 V10.5 H14.5 V14.5 H8.5 V10.5 H3.5 V4.5 H8.5 Z" fill="#5cd048" stroke="#2a7a22" stroke-width="1"/><path d="M9.5 1.5 H13.5 V5.5 H18.5 V7 H9.5 Z" fill="#a4f08c"/></svg>
<div class="a" style="left:697px;top:314px;width:23px;height:15px;border:1px solid #2a4c7c;border-radius:3px;background:linear-gradient(#fff,#ecebe6 70%,#d8d4c8)"></div>
<svg style="left:697px;top:314px" width="23" height="15" viewBox="0 0 23 15"><path d="M4 7 L6.5 4.5 L10 8 L17 1.5 L19.5 4 L10 13 Z" fill="#3cb83a" stroke="#1e7a1e" stroke-width="0.8"/></svg>
<div class="a" style="left:724px;top:314px;width:23px;height:15px;border:1px solid #2a4c7c;border-radius:3px;background:linear-gradient(#fff,#ecebe6 70%,#d8d4c8)"></div>
<svg style="left:724px;top:314px" width="23" height="15" viewBox="0 0 23 15"><path d="M5 8 L5 4 C5 3 6 2.5 7 2.5 L14 2.5 L14 0.5 L18 4 L14 7.5 L14 5.5 L8 5.5 L8 8 Z" fill="#5aa0ec" stroke="#2a6ac0" stroke-width="0.7"/><path d="M18 7 L18 11 C18 12 17 12.5 16 12.5 L9 12.5 L9 14.5 L5 11 L9 7.5 L9 9.5 L15 9.5 L15 7 Z" fill="#5aa0ec" stroke="#2a6ac0" stroke-width="0.7"/></svg>
<div class="a" style="left:751px;top:314px;width:23px;height:15px;border:1px solid #2a4c7c;border-radius:3px;background:linear-gradient(#fff,#ecebe6 70%,#d8d4c8)"></div>
<svg style="left:751px;top:314px" width="23" height="15" viewBox="0 0 23 15"><path d="M5 3 L8 0.8 L11.5 5 L15 0.8 L18 3 L14 7.5 L18 12 L15 14.2 L11.5 10 L8 14.2 L5 12 L9 7.5 Z" fill="#f0501e" stroke="#a82a10" stroke-width="0.8"/></svg>
<div class="a" style="left:300px;top:334px;width:480px;height:1px;background:#aca899"></div>
<div class="a" style="left:300px;top:335px;width:480px;height:1px;background:#fff"></div>
<div class="a" style="left:304px;top:341px;width:470px;height:190px;border:1px solid #7f9db9;background:#fff"></div>
<div class="a" style="left:305px;top:342px;width:468px;height:20px;background:linear-gradient(#ebeadb 0,#ebeadb 17px,#e2decd 17px,#d8d4c3 19px,#cbc7b8 20px)"></div>
<div class="a" style="left:335px;top:346px;width:1px;height:13px;background:#c7c5b2"></div>
<div class="a" style="left:336px;top:346px;width:1px;height:13px;background:#fff"></div>
<div class="a" style="left:411px;top:346px;width:1px;height:13px;background:#c7c5b2"></div>
<div class="a" style="left:412px;top:346px;width:1px;height:13px;background:#fff"></div>
<div class="a" style="left:486px;top:346px;width:1px;height:13px;background:#c7c5b2"></div>
<div class="a" style="left:487px;top:346px;width:1px;height:13px;background:#fff"></div>
<div class="a" style="left:550px;top:346px;width:1px;height:13px;background:#c7c5b2"></div>
<div class="a" style="left:551px;top:346px;width:1px;height:13px;background:#fff"></div>
<div class="a" style="left:704px;top:346px;width:1px;height:13px;background:#c7c5b2"></div>
<div class="a" style="left:705px;top:346px;width:1px;height:13px;background:#fff"></div>
<svg style="left:326px;top:349px" width="10" height="6" viewBox="0 0 10 6"><path d="M0.5 5.5 L4.5 0.5 L8.5 5.5 Z" fill="#aca899"/></svg>
<div class="t" style="left:346px;top:347px;letter-spacing:-0.04px;">Start Date</div>
<div class="t" style="left:420px;top:347px;letter-spacing:-0.39px;">End Date</div>
<div class="t" style="left:496px;top:347px;letter-spacing:-0.44px;">Period</div>
<div class="t" style="left:559px;top:347px;letter-spacing:-0.74px;">Member</div>
<div class="t" style="left:713px;top:347px;letter-spacing:-0.37px;">Amount</div>
<div class="a" style="left:305px;top:362px;width:32px;height:151px;background:#f8f7f3"></div>
<div class="a" style="left:337px;top:362px;width:1px;height:151px;background:#ebe9e1"></div>
<div class="a" style="left:412px;top:362px;width:1px;height:151px;background:#ebe9e1"></div>
<div class="a" style="left:487px;top:362px;width:1px;height:151px;background:#ebe9e1"></div>
<div class="a" style="left:551px;top:362px;width:1px;height:151px;background:#ebe9e1"></div>
<div class="a" style="left:705px;top:362px;width:1px;height:151px;background:#ebe9e1"></div>
<div class="a" style="left:305px;top:376px;width:468px;height:1px;background:#ebe9e1"></div>
<div class="a" style="left:305px;top:390px;width:468px;height:1px;background:#ebe9e1"></div>
<div class="a" style="left:305px;top:404px;width:468px;height:1px;background:#ebe9e1"></div>
<div class="a" style="left:305px;top:418px;width:468px;height:1px;background:#ebe9e1"></div>
<div class="a" style="left:305px;top:432px;width:468px;height:1px;background:#ebe9e1"></div>
<div class="a" style="left:305px;top:446px;width:468px;height:1px;background:#ebe9e1"></div>
<div class="a" style="left:305px;top:460px;width:468px;height:1px;background:#ebe9e1"></div>
<div class="a" style="left:305px;top:474px;width:468px;height:1px;background:#ebe9e1"></div>
<div class="a" style="left:305px;top:488px;width:468px;height:1px;background:#ebe9e1"></div>
<div class="a" style="left:305px;top:502px;width:468px;height:1px;background:#ebe9e1"></div>
<div class="t" style="left:343px;top:364px;">01/01/2008</div>
<div class="t" style="left:418px;top:364px;">12/31/2010</div>
<div class="t" style="left:492px;top:364px;letter-spacing:-0.32px;">Monthly</div>
<div class="t" style="left:556px;top:364px;letter-spacing:-0.2px;">Mrs. Alicia Lynne Young</div>
<div class="t" style="left:710px;top:364px;letter-spacing:-0.1px;">$75.00</div>
<div class="t" style="left:343px;top:378px;">01/01/2008</div>
<div class="t" style="left:418px;top:378px;">12/31/2010</div>
<div class="t" style="left:492px;top:378px;letter-spacing:-0.37px;">Weekly</div>
<div class="t" style="left:556px;top:378px;letter-spacing:-0.1px;">Mr. Steve Watson</div>
<div class="t" style="left:710px;top:378px;letter-spacing:-0.1px;">$75.00</div>
<div class="t" style="left:343px;top:392px;">01/01/2008</div>
<div class="t" style="left:418px;top:392px;">12/31/2010</div>
<div class="t" style="left:492px;top:392px;letter-spacing:-0.03px;">Quarterly</div>
<div class="t" style="left:556px;top:392px;letter-spacing:-0.1px;">Mr. Walter Simone Ramirez...</div>
<div class="t" style="left:710px;top:392px;letter-spacing:-0.1px;">$975.00</div>
<div class="t" style="left:343px;top:406px;">01/01/2008</div>
<div class="t" style="left:418px;top:406px;">12/31/2010</div>
<div class="t" style="left:492px;top:406px;letter-spacing:-0.32px;">Monthly</div>
<div class="t" style="left:556px;top:406px;letter-spacing:-0.1px;">Mr. Jeff Osborne</div>
<div class="t" style="left:710px;top:406px;letter-spacing:-0.1px;">$250.00</div>
<div class="t" style="left:343px;top:420px;">01/01/2008</div>
<div class="t" style="left:418px;top:420px;">12/31/2010</div>
<div class="t" style="left:492px;top:420px;letter-spacing:-0.37px;">Weekly</div>
<div class="t" style="left:556px;top:420px;letter-spacing:-0.2px;">Mr. Harold McMahon</div>
<div class="t" style="left:710px;top:420px;letter-spacing:-0.1px;">$65.00</div>
<div class="t" style="left:343px;top:434px;">01/01/2008</div>
<div class="t" style="left:418px;top:434px;">12/31/2010</div>
<div class="t" style="left:492px;top:434px;letter-spacing:-0.32px;">Monthly</div>
<div class="t" style="left:556px;top:434px;letter-spacing:-0.1px;">Mr. Gregory Frazier</div>
<div class="t" style="left:710px;top:434px;letter-spacing:-0.1px;">$125.00</div>
<div class="t" style="left:343px;top:448px;">01/01/2008</div>
<div class="t" style="left:418px;top:448px;">12/31/2010</div>
<div class="t" style="left:492px;top:448px;letter-spacing:-0.32px;">Monthly</div>
<div class="t" style="left:556px;top:448px;letter-spacing:-0.1px;">Ms. Sheila M. Foxworthy</div>
<div class="t" style="left:710px;top:448px;letter-spacing:-0.1px;">$250.00</div>
<div class="t" style="left:343px;top:462px;">01/01/2008</div>
<div class="t" style="left:418px;top:462px;">12/31/2010</div>
<div class="t" style="left:492px;top:462px;letter-spacing:-0.32px;">Monthly</div>
<div class="t" style="left:556px;top:462px;letter-spacing:-0.1px;">Mr. Adrian T. Barnes</div>
<div class="t" style="left:710px;top:462px;letter-spacing:-0.1px;">$150.00</div>
<div class="t" style="left:343px;top:476px;">01/01/2008</div>
<div class="t" style="left:418px;top:476px;">12/31/2010</div>
<div class="t" style="left:492px;top:476px;letter-spacing:-0.37px;">Weekly</div>
<div class="t" style="left:556px;top:476px;letter-spacing:-0.1px;">Mr. Aaron Michael Adler</div>
<div class="t" style="left:710px;top:476px;letter-spacing:-0.1px;">$100.00</div>
<div class="a" style="left:305px;top:513px;width:467px;height:15px;background:#fdfdfa"></div>
<div class="a" style="left:306px;top:514px;width:15px;height:14px;border:1px solid #fff;border-radius:2px;background:linear-gradient(135deg,#c8d6fb,#b7caf5 60%,#aac0f2)"></div>
<svg style="left:310px;top:517px" width="7" height="9" viewBox="0 0 7 9"><path d="M5.5 1 L2 4.5 L5.5 8" fill="none" stroke="#4d6185" stroke-width="2"/></svg>
<div class="a" style="left:756px;top:514px;width:15px;height:14px;border:1px solid #fff;border-radius:2px;background:linear-gradient(135deg,#c8d6fb,#b7caf5 60%,#aac0f2)"></div>
<svg style="left:760px;top:517px" width="7" height="9" viewBox="0 0 7 9"><path d="M1.5 1 L5 4.5 L1.5 8" fill="none" stroke="#4d6185" stroke-width="2"/></svg>
<div class="a" style="left:323px;top:514px;width:425px;height:14px;border:1px solid #fff;border-radius:3px;background:linear-gradient(#c9d8fc,#bccff8 50%,#b0c6f6)"></div>
<div class="a" style="left:531px;top:518px;width:1px;height:6px;background:#8ea6e0"></div>
<div class="a" style="left:532px;top:519px;width:1px;height:6px;background:#eef4fe"></div>
<div class="a" style="left:533px;top:518px;width:1px;height:6px;background:#8ea6e0"></div>
<div class="a" style="left:534px;top:519px;width:1px;height:6px;background:#eef4fe"></div>
<div class="a" style="left:535px;top:518px;width:1px;height:6px;background:#8ea6e0"></div>
<div class="a" style="left:536px;top:519px;width:1px;height:6px;background:#eef4fe"></div>
<div class="a" style="left:537px;top:518px;width:1px;height:6px;background:#8ea6e0"></div>
<div class="a" style="left:538px;top:519px;width:1px;height:6px;background:#eef4fe"></div>
<div class="a" style="left:150px;top:527px;width:124px;height:15px;background:#fdfdfa"></div>
<div class="a" style="left:151px;top:528px;width:15px;height:14px;border:1px solid #fff;border-radius:2px;background:linear-gradient(135deg,#c8d6fb,#b7caf5 60%,#aac0f2)"></div>
<svg style="left:155px;top:531px" width="7" height="9" viewBox="0 0 7 9"><path d="M5.5 1 L2 4.5 L5.5 8" fill="none" stroke="#4d6185" stroke-width="2"/></svg>
<div class="a" style="left:258px;top:528px;width:15px;height:14px;border:1px solid #fff;border-radius:2px;background:linear-gradient(135deg,#c8d6fb,#b7caf5 60%,#aac0f2)"></div>
<svg style="left:262px;top:531px" width="7" height="9" viewBox="0 0 7 9"><path d="M1.5 1 L5 4.5 L1.5 8" fill="none" stroke="#4d6185" stroke-width="2"/></svg>
<div class="a" style="left:168px;top:528px;width:73px;height:14px;border:1px solid #fff;border-radius:3px;background:linear-gradient(#c9d8fc,#bccff8 50%,#b0c6f6)"></div>
<div class="a" style="left:200px;top:532px;width:1px;height:6px;background:#8ea6e0"></div>
<div class="a" style="left:201px;top:533px;width:1px;height:6px;background:#eef4fe"></div>
<div class="a" style="left:202px;top:532px;width:1px;height:6px;background:#8ea6e0"></div>
<div class="a" style="left:203px;top:533px;width:1px;height:6px;background:#eef4fe"></div>
<div class="a" style="left:204px;top:532px;width:1px;height:6px;background:#8ea6e0"></div>
<div class="a" style="left:205px;top:533px;width:1px;height:6px;background:#eef4fe"></div>
<div class="a" style="left:206px;top:532px;width:1px;height:6px;background:#8ea6e0"></div>
<div class="a" style="left:207px;top:533px;width:1px;height:6px;background:#eef4fe"></div>
</body></html>
